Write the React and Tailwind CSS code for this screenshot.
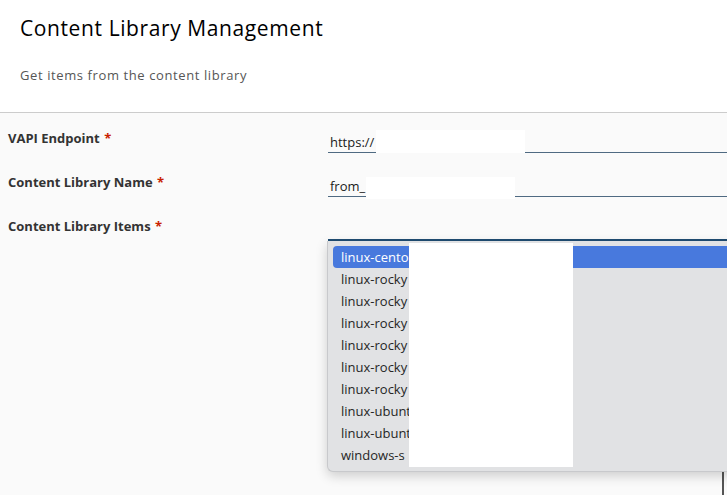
export default function App() {
  const items = [
    "linux-cento",
    "linux-rocky",
    "linux-rocky",
    "linux-rocky",
    "linux-rocky",
    "linux-rocky",
    "linux-rocky",
    "linux-ubunt",
    "linux-ubunt",
    "windows-s",
  ];

  return (
    <div
      className="relative h-[495px] w-[727px] overflow-hidden bg-[#fafafa] text-[#1a1a1a]"
      style={{ fontFamily: '"Open Sans", "Liberation Sans", sans-serif' }}
    >
      {/* Header */}
      <div className="h-[113px] border-b border-[#cccccc] bg-white px-5">
        <h1 className="pt-[14px] text-[21px] leading-[28px] tracking-[0.6px] text-black">
          Content Library Management
        </h1>
        <p className="mt-[24px] text-[13px] leading-[18px] tracking-[0.6px] text-[#565656]">
          Get items from the content library
        </p>
      </div>

      {/* Form */}
      <div className="pt-4">
        <div className="flex h-[44px]">
          <label className="w-[328px] pl-2 text-[13px] font-bold leading-[18px] text-[#333]">
            VAPI Endpoint <span className="ml-[1px] text-[#c92100]">*</span>
          </label>
          <div className="relative h-6 flex-1 border-b border-[#4f6a82]">
            <span className="pl-[2px] text-[13px] leading-6">https://</span>
            <span className="absolute left-[48px] top-[1px] h-[23px] w-[149px] bg-white" />
          </div>
        </div>

        <div className="flex h-[44px]">
          <label className="w-[328px] pl-2 text-[13px] font-bold leading-[18px] text-[#333]">
            Content Library Name <span className="ml-[1px] text-[#c92100]">*</span>
          </label>
          <div className="relative h-6 flex-1 border-b border-[#4f6a82]">
            <span className="pl-[2px] text-[13px] leading-6">from_</span>
            <span className="absolute left-[38px] top-[4px] h-[22px] w-[149px] bg-white" />
          </div>
        </div>

        <div className="flex h-[44px]">
          <label className="w-[328px] pl-2 text-[13px] font-bold leading-[18px] text-[#333]">
            Content Library Items <span className="ml-[1px] text-[#c92100]">*</span>
          </label>
          <div className="relative h-6 flex-1 border-b-2 border-[#1f4d73]">
            {/* Open select popup */}
            <div className="absolute left-[-1px] top-[24px] z-10 w-[420px] rounded-bl-[6px] border-l border-b border-[#c8c9cc] bg-[#e1e2e4] py-[5px] pl-[5px] shadow-[0_4px_12px_rgba(0,0,0,0.18)]">
              {items.map((it, i) => (
                <div
                  key={i}
                  className={
                    i === 0
                      ? "h-[22px] rounded-l-[4px] bg-[#4879dd] pl-[8px] text-[13px] leading-[22px] text-white"
                      : "h-[22px] pl-[8px] text-[13px] leading-[22px] text-[#262626]"
                  }
                >
                  {it}
                </div>
              ))}
              <span className="absolute left-[81px] top-[2px] h-[224px] w-[164px] bg-white" />
            </div>
          </div>
        </div>
      </div>

      <div className="absolute bottom-0 right-[3px] h-[24px] w-[2px] bg-[#555]" />
    </div>
  );
}
